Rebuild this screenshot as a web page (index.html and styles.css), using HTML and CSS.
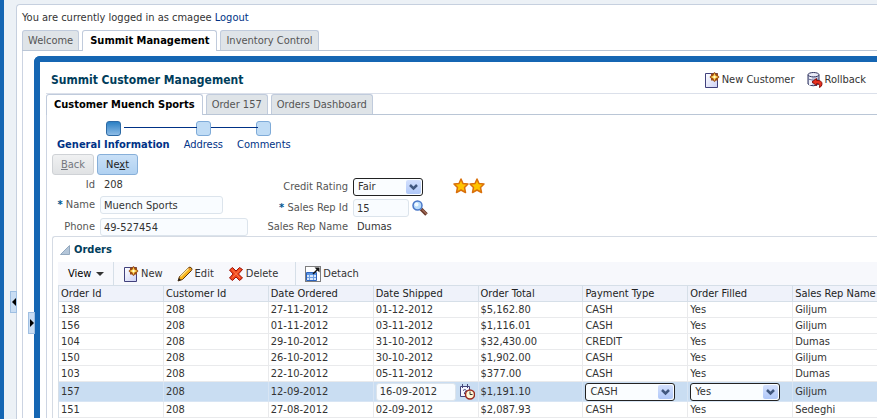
FILE: index.html
```
<!DOCTYPE html>
<html lang="en">
<head>
    <meta charset="UTF-8">
    <meta name="viewport" content="width=device-width, initial-scale=1.0">
    <title>Summit Customer Management</title>
    <link rel="stylesheet" href="styles.css">
</head>
<body>
    <!-- Shared icons -->
    <svg class="icon-defs" width="0" height="0" aria-hidden="true">
        <linearGradient id="page-fill" x1="0" y1="0" x2="1" y2="1">
            <stop offset="0" stop-color="#fff"/>
            <stop offset="1" stop-color="#ccd0f4"/>
        </linearGradient>
        <symbol id="icon-new" viewBox="0 0 16 16">
            <path d="M1.500 1.500H13.500V15.500H1.500Z" fill="url(#page-fill)" stroke="#41417c"/>
            <path d="M10.500 0L12 1.500H14V3.500L15.500 5L14 6.500V8.500H12L10.500 10L9 8.500H7V6.500L5.500 5L7 3.500V1.500H9Z" fill="#9c4a14"/>
            <path d="M10.500 1L11.500 3.500L14.500 5L11.500 6.500L10.500 9L9.500 6.500L6.500 5L9.500 3.500Z" fill="#ffd24d"/>
            <circle cx="10.500" cy="5" r="1.200" fill="#fffbd0"/>
        </symbol>
        <symbol id="icon-edit" viewBox="0 0 16 16">
            <path d="M1 15L2.500 10.500L11.500 1.500Q13 .5 14.500 2Q15.500 3.500 14.500 4.500L5.500 13.500Z" fill="#f7b31c" stroke="#5a3510"/>
            <path d="M3.500 10.500L12 2" stroke="#ffe792" stroke-width="1.500"/>
            <path d="M11.500 2L14 4.500" stroke="#d2691e"/>
            <path d="M1 15L2 12L4 14Z" fill="#222"/>
        </symbol>
        <symbol id="icon-delete" viewBox="0 0 16 16">
            <path d="M1.500 4L4.500 1.500L8 5L11.500 1.500L14.500 3.500L10.500 8L14.500 12L11.500 14.500L8 11L4.500 14.500L1.500 12L5 8Z" fill="#f0471d" stroke="#9e1208"/>
            <path d="M4 3.500L12 12M12 3.500L4.500 11.500" stroke="#ff7a48"/>
        </symbol>
        <symbol id="icon-detach" viewBox="0 0 16 16">
            <path d="M.5 .5H15.500V15.500H.5Z" fill="#fff" stroke="#000" stroke-dasharray="1 1"/>
            <path d="M1.500 6.500H11.500V14.500H1.500Z" fill="#d7e7fb" stroke="#2b62bd"/>
            <path d="M2 8H11" stroke="#5b94e0" stroke-width="2"/>
            <path d="M4.500 9V14M8.500 9V14M2 11.500H11" stroke="#6f9fe4"/>
            <path d="M8 8L12.500 3.500" stroke="#111" stroke-width="1.500"/>
            <path d="M9.500 1.500H14.500V6.500Z" fill="#111"/>
        </symbol>
        <symbol id="icon-rollback" viewBox="0 0 16 16">
            <path d="M1 3V12Q6 15.500 12 12V3Z" fill="#c3c8df" stroke="#30345f"/>
            <path d="M2 4H5V13H2Z" fill="#eef0fa"/>
            <ellipse cx="6.500" cy="2.700" rx="5.500" ry="2.200" fill="#e9ebf7" stroke="#30345f"/>
            <path d="M1 7Q6 9.500 12 7" fill="none" stroke="#6c7199"/>
            <path d="M5 10L9.500 6.500V8.500Q15 8 15 12Q15 14.500 12.500 15.500Q13.500 11.500 9.500 11.500V13.500Z" fill="#e8301e" stroke="#8c0f0a"/>
        </symbol>
        <symbol id="icon-star" viewBox="0 0 16 16">
            <path d="M8 1L10 5.500L15 6L11.500 9.500L12.500 14.500L8 12L3.500 14.500L4.500 9.500L1 6L6 5.500Z" fill="#ffc400" stroke="#d9700c" stroke-width="1.500" stroke-linejoin="round"/>
        </symbol>
        <symbol id="icon-search" viewBox="0 0 16 16">
            <path d="M9 9L14.500 14.500" stroke="#6b3a2a" stroke-width="3.500"/>
            <path d="M10 9.500L14.500 14" stroke="#c98f78"/>
            <circle cx="5.500" cy="5.500" r="4.500" fill="#b9dcfb" stroke="#4a78c8" stroke-width="1.500"/>
            <circle cx="4.500" cy="4.500" r="2" fill="#f2faff"/>
        </symbol>
        <symbol id="icon-date" viewBox="0 0 16 16">
            <path d="M1.500 2.500H10.500V12.500H1.500Z" fill="#f6f6ff" stroke="#45457a"/>
            <path d="M3.500 0V4M8.500 0V4" stroke="#45457a"/>
            <path d="M4 6.500Q6 4.500 7.500 6.500L5.500 8.500V10" fill="none" stroke="#45457a"/>
            <circle cx="11" cy="10.500" r="4.500" fill="#fff6d5" stroke="#9c2b20" stroke-width="1.500"/>
            <path d="M11 7.500V10.500H13.500" fill="none" stroke="#333"/>
        </symbol>
        <symbol id="icon-chevron" viewBox="0 0 14 14">
            <path d="M3.500 5L7 8.500L10.500 5" fill="none" stroke="#41587f" stroke-width="2.500"/>
        </symbol>
    </svg>

    <div class="shell">
        <button class="splitter splitter-outer" aria-label="Collapse pane"></button>

        <p class="login">You are currently logged in as cmagee <a href="#">Logout</a></p>

        <nav class="tabs">
            <a href="#" class="tab">Welcome</a>
            <a href="#" class="tab active">Summit Management</a>
            <a href="#" class="tab">Inventory Control</a>
        </nav>

        <div class="tab-body">
            <button class="splitter splitter-inner" aria-label="Expand pane"></button>

            <main class="frame">
                <header class="page-header">
                    <h1>Summit Customer Management</h1>
                    <div class="page-actions">
                        <button class="action"><svg class="icon"><use href="#icon-new"/></svg>New Customer</button>
                        <button class="action"><svg class="icon"><use href="#icon-rollback"/></svg>Rollback</button>
                    </div>
                </header>

                <nav class="tabs sub-tabs">
                    <a href="#" class="tab active">Customer Muench Sports</a>
                    <a href="#" class="tab">Order 157</a>
                    <a href="#" class="tab">Orders Dashboard</a>
                </nav>

                <div class="customer">
                    <!-- Train -->
                    <div class="train">
                        <a href="#" class="stop current">General Information</a>
                        <a href="#" class="stop">Address</a>
                        <a href="#" class="stop">Comments</a>
                    </div>

                    <div class="train-buttons">
                        <button class="btn" disabled><u>B</u>ack</button>
                        <button class="btn btn-next">Ne<u>x</u>t</button>
                    </div>

                    <!-- Customer form -->
                    <form class="customer-form">
                        <div class="fields">
                            <span class="label">Id</span>
                            <span class="value">208</span>
                            <label class="label" for="name"><b>*</b> Name</label>
                            <input class="text name-input" id="name" type="text" value="Muench Sports">
                            <label class="label" for="phone">Phone</label>
                            <input class="text phone-input" id="phone" type="text" value="49-527454">
                        </div>
                        <div class="fields fields-rep">
                            <label class="label" for="rating">Credit Rating</label>
                            <span class="select rating-select">
                                <select id="rating"><option>Fair</option></select>
                                <svg class="arrow"><use href="#icon-chevron"/></svg>
                            </span>
                            <label class="label" for="rep"><b>*</b> Sales Rep Id</label>
                            <span class="lookup">
                                <input class="text rep-input" id="rep" type="text" value="15">
                                <button class="icon-btn" type="button" aria-label="Search"><svg class="icon"><use href="#icon-search"/></svg></button>
                            </span>
                            <span class="label">Sales Rep Name</span>
                            <span class="value">Dumas</span>
                        </div>
                        <div class="stars">
                            <svg class="icon"><use href="#icon-star"/></svg>
                            <svg class="icon"><use href="#icon-star"/></svg>
                        </div>
                    </form>

                    <!-- Orders -->
                    <section class="orders">
                        <h2><svg class="disclose" viewBox="0 0 10 10"><path d="M.5 9.500H9.500V.5Z" fill="#b4c6d9" stroke="#93a9bf"/></svg>Orders</h2>
                        <div class="toolbar">
                            <button class="action view">View <svg class="caret" viewBox="0 0 8 4"><path d="M0 0H8L4 4Z" fill="#333"/></svg></button>
                            <div class="tool-group">
                                <button class="action"><svg class="icon"><use href="#icon-new"/></svg>New</button>
                                <button class="action"><svg class="icon"><use href="#icon-edit"/></svg>Edit</button>
                                <button class="action"><svg class="icon"><use href="#icon-delete"/></svg>Delete</button>
                            </div>
                            <div class="tool-group">
                                <button class="action"><svg class="icon"><use href="#icon-detach"/></svg>Detach</button>
                            </div>
                        </div>
                        <table>
                            <thead>
                                <tr><th>Order Id</th><th>Customer Id</th><th>Date Ordered</th><th>Date Shipped</th><th>Order Total</th><th>Payment Type</th><th>Order Filled</th><th>Sales Rep Name</th></tr>
                            </thead>
                            <tbody>
                                <tr><td>138</td><td>208</td><td>27-11-2012</td><td>01-12-2012</td><td>$5,162.80</td><td>CASH</td><td>Yes</td><td>Giljum</td></tr>
                                <tr><td>156</td><td>208</td><td>01-11-2012</td><td>03-11-2012</td><td>$1,116.01</td><td>CASH</td><td>Yes</td><td>Giljum</td></tr>
                                <tr><td>104</td><td>208</td><td>29-10-2012</td><td>31-10-2012</td><td>$32,430.00</td><td>CREDIT</td><td>Yes</td><td>Dumas</td></tr>
                                <tr><td>150</td><td>208</td><td>26-10-2012</td><td>30-10-2012</td><td>$1,902.00</td><td>CASH</td><td>Yes</td><td>Giljum</td></tr>
                                <tr><td>103</td><td>208</td><td>22-10-2012</td><td>05-11-2012</td><td>$377.00</td><td>CASH</td><td>Yes</td><td>Dumas</td></tr>
                                <tr class="selected">
                                    <td>157</td>
                                    <td>208</td>
                                    <td>12-09-2012</td>
                                    <td>
                                        <span class="lookup">
                                            <input class="text date-input" type="text" value="16-09-2012" aria-label="Date Shipped">
                                            <button class="icon-btn" type="button" aria-label="Pick date"><svg class="icon"><use href="#icon-date"/></svg></button>
                                        </span>
                                    </td>
                                    <td>$1,191.10</td>
                                    <td>
                                        <span class="select cell-select">
                                            <select aria-label="Payment Type"><option>CASH</option><option>CREDIT</option></select>
                                            <svg class="arrow"><use href="#icon-chevron"/></svg>
                                        </span>
                                    </td>
                                    <td>
                                        <span class="select cell-select">
                                            <select aria-label="Order Filled"><option>Yes</option><option>No</option></select>
                                            <svg class="arrow"><use href="#icon-chevron"/></svg>
                                        </span>
                                    </td>
                                    <td>Giljum</td>
                                </tr>
                                <tr><td>151</td><td>208</td><td>27-08-2012</td><td>02-09-2012</td><td>$2,087.93</td><td>CASH</td><td>Yes</td><td>Sedeghi</td></tr>
                            </tbody>
                        </table>
                    </section>
                </div>
            </main>
        </div>
    </div>
</body>
</html>
```
FILE: styles.css
```
* {
    box-sizing: border-box;
    margin: 0;
    padding: 0;
}

body {
    min-height: 100vh;
    padding: 4px 0 0 12px;
    overflow: hidden;
    background: #ecf1f6;
    border-left: 4px solid #1566b3;
    color: #333;
    font-family: Tahoma, "DejaVu Sans Condensed", "DejaVu Sans", sans-serif;
    font-size: 11px;
    font-stretch: condensed;
    line-height: 14px;
}

button,
input,
select {
    font: inherit;
    color: inherit;
}

a {
    color: #003286;
    text-decoration: none;
}

.icon-defs {
    position: absolute;
}

.icon {
    width: 16px;
    height: 16px;
    flex: none;
}

/* Outer panel */
.shell {
    position: relative;
    min-height: calc(100vh - 4px);
    padding: 6px 0 0 5px;
    background: #fff;
    border: solid #c6d0df;
    border-width: 1px 0 0 1px;
    border-top-left-radius: 4px;
}

.login {
    height: 19px;
}

/* Tabs */
.tabs {
    display: flex;
    gap: 3px;
    border-bottom: 1px solid #bac6d6;
}

.tab {
    height: 20px;
    padding: 3px 5px;
    background: #dfe4e8;
    border: 1px solid #c0cbdc;
    border-bottom: 0;
    border-radius: 3px 3px 0 0;
    color: #555;
    white-space: nowrap;
}

.tab.active {
    height: 21px;
    margin-bottom: -1px;
    padding: 3px 7px;
    background: #fff;
    color: #000;
    font-weight: bold;
}

.tab-body {
    position: relative;
    padding: 5px 0 0 11px;
    border-left: 1px solid #ccd4e2;
}

.frame {
    border: solid #1566b3;
    border-width: 6px 0 0 6px;
    border-top-left-radius: 6px;
}

/* Collapse handles */
.splitter {
    position: absolute;
    z-index: 1;
    display: flex;
    align-items: center;
    justify-content: center;
    width: 7px;
    height: 22px;
    background: #c9ddf3;
    border: 1px solid #9fbfe2;
}

.splitter::before {
    content: "";
    border: 4px solid transparent;
}

.splitter-outer {
    top: 286px;
    left: -7px;
}

.splitter-outer::before {
    border-left-width: 0;
    border-right-color: #000;
}

.splitter-inner {
    top: 261px;
    left: 5px;
}

.splitter-inner::before {
    border-right-width: 0;
    border-left-color: #000;
}

/* Page header */
.page-header {
    display: flex;
    align-items: center;
    justify-content: space-between;
    height: 31px;
    margin-left: 6px;
    padding: 4px 11px 0 5px;
}

.page-header h1 {
    color: #003d5b;
    font-size: 12px;
}

.page-actions {
    display: flex;
    gap: 12px;
}

.action {
    display: flex;
    align-items: center;
    gap: 2px;
    background: none;
    border: 0;
    white-space: nowrap;
}

.sub-tabs {
    margin-left: 6px;
    border-top: 1px solid #dbe0ea;
}

.customer {
    margin-left: 6px;
    padding: 6px 0 0 5px;
    border-left: 1px solid #ccd4e2;
}

/* Train */
.train {
    display: flex;
    gap: 14px;
    padding-left: 5px;
}

.stop {
    position: relative;
    text-align: center;
}

.stop::before {
    content: "";
    display: block;
    width: 13px;
    height: 13px;
    margin: 0 auto 2px;
    background: #c0dcf5;
    border: 1px solid #7fabd8;
    border-radius: 3px;
}

.stop + .stop::after {
    content: "";
    position: absolute;
    top: 6px;
    right: calc(50% + 6px);
    width: 47px;
    height: 1px;
    background: #003286;
}

.stop.current + .stop::after {
    width: 73px;
}

.stop.current {
    font-weight: bold;
}

.stop.current::before {
    background: linear-gradient(#2c80c4, #8dbce6);
    border-color: #2d6aa5;
}

.train-buttons {
    display: flex;
    gap: 3px;
    margin-top: 2px;
}

.btn {
    height: 21px;
    padding: 0 8px;
    background: linear-gradient(#f0f1f2, #e0e2e4);
    border: 1px solid #cfd2d6;
    border-radius: 3px;
    color: #74777f;
}

.btn-next {
    background: linear-gradient(#c9e0f7, #b0d1f1);
    border-color: #87afd9;
    color: #222;
}

/* Customer form */
.customer-form {
    display: flex;
    align-items: flex-start;
    padding-top: 3px;
}

.fields {
    display: grid;
    grid-template-columns: 43px 148px;
    gap: 4px 5px;
    align-items: center;
}

.fields-rep {
    grid-template-columns: 100px 80px;
    row-gap: 3px;
}

.label {
    color: #555;
    text-align: right;
    white-space: nowrap;
}

.label b {
    color: #00558f;
}

.value {
    padding-left: 4px;
}

.text {
    height: 18px;
    padding: 0 3px;
    background: #f9fcff;
    border: 1px solid #dce4ec;
    border-radius: 3px;
}

.name-input {
    width: 123px;
}

.phone-input {
    width: 148px;
}

.rep-input {
    width: 56px;
}

.date-input {
    width: 80px;
}

.lookup {
    display: flex;
    align-items: center;
    gap: 3px;
}

.icon-btn {
    display: flex;
    background: none;
    border: 0;
}

.select {
    display: flex;
    position: relative;
}

.select select {
    width: 100%;
    height: 18px;
    padding-left: 4px;
    appearance: none;
    background: #fafdff;
    border: 1px solid #222;
    border-radius: 3px;
}

.arrow {
    position: absolute;
    top: 2px;
    right: 2px;
    width: 15px;
    height: 14px;
    background: linear-gradient(#d3e0fd, #b0c8f8);
    border-radius: 2px;
    pointer-events: none;
}

.rating-select {
    width: 70px;
}

.cell-select {
    width: 90px;
}

.stars {
    display: flex;
    margin-left: 20px;
}

/* Orders */
.orders {
    border: solid #d5dbe4;
    border-width: 1px 0 0 1px;
    border-top-left-radius: 3px;
    padding-left: 5px;
}

.orders h2 {
    display: flex;
    align-items: center;
    gap: 4px;
    height: 25px;
    padding-left: 2px;
    color: #003d5b;
    font-size: 11px;
}

.disclose {
    width: 10px;
    height: 10px;
}

.toolbar {
    display: flex;
    height: 23px;
    background: #f7f8fc;
}

.view {
    gap: 5px;
    width: 55px;
    padding-left: 10px;
    color: #000;
}

.caret {
    width: 8px;
    height: 4px;
}

.tool-group {
    display: flex;
    gap: 14px;
    padding: 0 17px 0 9px;
    border-left: 1px solid #d6dfe8;
}

table {
    width: 840px;
    table-layout: fixed;
    border-collapse: separate;
    border-spacing: 0;
    border-left: 1px solid #d6dfe8;
}

th,
td {
    height: 16px;
    padding: 0 2px;
    border-right: 1px solid #e9eaec;
    border-bottom: 1px solid #e9eaec;
    text-align: left;
    white-space: nowrap;
}

th {
    height: 17px;
    background: #eff2fa;
    border-top: 1px solid #d6dfe8;
    border-color: #d6dfe8;
    color: #222;
    font-weight: normal;
}

.selected td {
    height: 20px;
    background: #c9ddf2;
    border-color: #d8e5f4;
}
```
